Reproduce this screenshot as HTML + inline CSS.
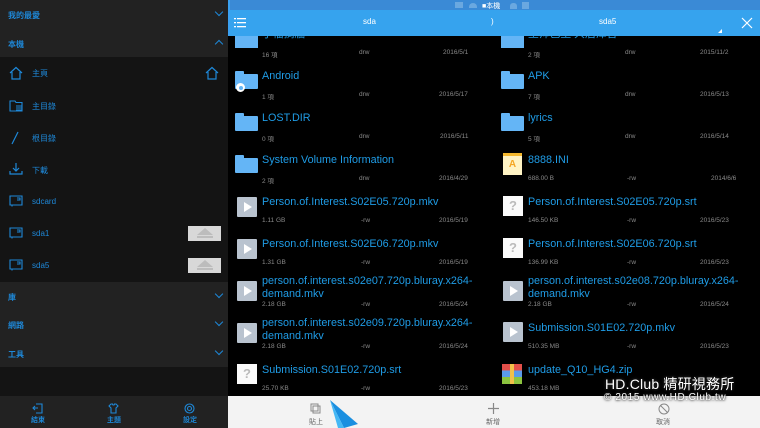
<!DOCTYPE html>
<html><head><meta charset="utf-8"><style>
*{margin:0;padding:0;box-sizing:border-box}
body{width:760px;height:428px;overflow:hidden;background:#000;font-family:"Liberation Sans","Noto Sans CJK TC",sans-serif;position:relative}
.a{position:absolute}
.sb{left:0;top:0;width:228px;height:428px;background:#141414}
.sec{font-size:8px;color:#1e88d8;font-weight:bold}
.chev{width:6px;height:6px;border-right:1.3px solid #1e88d8;border-bottom:1.3px solid #1e88d8}
.it{font-size:8px;color:#1e88d8;left:32px}
.n{font-size:10.8px;line-height:12.5px;color:#1f9ce6;white-space:nowrap}
.m{font-size:6.5px;color:#8a8a8a;white-space:nowrap}
.fold{width:23px;height:15px;background:#64b5f6;border-radius:1px}
.fold:before{content:"";position:absolute;left:0;top:-3px;width:9px;height:4px;background:#64b5f6;border-radius:1px 1px 0 0}
.vid{width:20px;height:20px;background:#b9c3cf;border-radius:1px}
.vid:after{content:"";position:absolute;left:7px;top:5px;border-left:8px solid #fff;border-top:5px solid transparent;border-bottom:5px solid transparent}
.q{width:20px;height:20px;background:#fafafa;color:#bbb;font-size:13px;font-weight:bold;text-align:center;line-height:20px}
</style></head><body>
<div class="a sb"></div>
<div class="a" style="left:0;top:0;width:228px;height:57px;background:#222"></div>
<div class="a" style="left:0;top:282px;width:228px;height:85px;background:#222"></div>
<div class="a" style="left:0;top:396px;width:228px;height:32px;background:#222"></div>
<div class="a" style="left:228px;top:0;width:2px;height:36px;background:#3aa0f0"></div>
<div class="a sec" style="left:8px;top:10px">我的最愛</div><div class="a chev" style="left:216px;top:9px;transform:rotate(45deg)"></div>
<div class="a sec" style="left:8px;top:39px">本機</div><div class="a chev" style="left:216px;top:41px;transform:rotate(-135deg)"></div>
<svg class="a" style="left:9px;top:66px" width="14" height="14" viewBox="0 0 14 14" fill="none" stroke="#1e88d8" stroke-width="1.2"><path d="M1 7L7 1.5 13 7M3 6v7h8V6"/></svg>
<svg class="a" style="left:205px;top:66px" width="14" height="14" viewBox="0 0 14 14" fill="none" stroke="#1e88d8" stroke-width="1.2"><path d="M1 7L7 1.5 13 7M3 6v7h8V6"/></svg>
<div class="a it" style="top:68px">主頁</div>
<svg class="a" style="left:9px;top:99px" width="14" height="13" viewBox="0 0 14 13" fill="none" stroke="#1e88d8" stroke-width="1.1"><path d="M1 2h5l1 1.5h6V12H1z M7 7h6M7 9h6M7 11h6"/></svg>
<div class="a it" style="top:101px">主目錄</div>
<svg class="a" style="left:11px;top:131px" width="8" height="14"><path d="M7 1L1 13" stroke="#1e88d8" stroke-width="1.2"/></svg>
<div class="a it" style="top:133px">根目錄</div>
<svg class="a" style="left:9px;top:162px" width="14" height="13" viewBox="0 0 14 13" fill="none" stroke="#1e88d8" stroke-width="1.2"><path d="M7 1v8M4 6l3 3 3-3M1 9v3h12V9"/></svg>
<div class="a it" style="top:165px">下載</div>
<svg class="a" style="left:9px;top:195px" width="14" height="12" viewBox="0 0 14 12" fill="none" stroke="#1e88d8" stroke-width="1.1"><path d="M1 1h12v9H1zM8 3h3v2H8M3 10v1.5"/></svg>
<div class="a it" style="top:197px">sdcard</div>
<svg class="a" style="left:9px;top:227px" width="14" height="12" viewBox="0 0 14 12" fill="none" stroke="#1e88d8" stroke-width="1.1"><path d="M1 1h12v9H1zM8 3h3v2H8M3 10v1.5"/></svg>
<div class="a it" style="top:229px">sda1</div>
<svg class="a" style="left:9px;top:259px" width="14" height="12" viewBox="0 0 14 12" fill="none" stroke="#1e88d8" stroke-width="1.1"><path d="M1 1h12v9H1zM8 3h3v2H8M3 10v1.5"/></svg>
<div class="a it" style="top:261px">sda5</div>
<div class="a" style="left:188px;top:226px;width:33px;height:15px;background:#d8d8d8"><div class="a" style="left:9px;top:2px;border-bottom:7px solid #bcbcbc;border-left:8px solid transparent;border-right:8px solid transparent"></div><div class="a" style="left:9px;top:10px;width:16px;height:2px;background:#bcbcbc"></div></div>
<div class="a" style="left:188px;top:258px;width:33px;height:15px;background:#d8d8d8"><div class="a" style="left:9px;top:2px;border-bottom:7px solid #bcbcbc;border-left:8px solid transparent;border-right:8px solid transparent"></div><div class="a" style="left:9px;top:10px;width:16px;height:2px;background:#bcbcbc"></div></div>
<div class="a sec" style="left:8px;top:292px">庫</div><div class="a chev" style="left:216px;top:291px;transform:rotate(45deg)"></div>
<div class="a sec" style="left:8px;top:320px">網路</div><div class="a chev" style="left:216px;top:319px;transform:rotate(45deg)"></div>
<div class="a sec" style="left:8px;top:349px">工具</div><div class="a chev" style="left:216px;top:348px;transform:rotate(45deg)"></div>
<div class="a sec" style="left:31px;top:415px;font-size:7px">結束</div>
<div class="a sec" style="left:107px;top:415px;font-size:7px">主題</div>
<div class="a sec" style="left:183px;top:415px;font-size:7px">設定</div>
<svg class="a" style="left:32px;top:403px" width="11" height="11" fill="none" stroke="#1e88d8" stroke-width="1.1"><path d="M4 1h6v9H4M1 5h5M3 3l-2 2 2 2"/></svg>
<svg class="a" style="left:108px;top:403px" width="11" height="11" fill="none" stroke="#1e88d8" stroke-width="1.1"><path d="M3 1L1 3l2 2v5h5V5l2-2-2-2H6.5a1 1 0 0 1-2 0z"/></svg>
<svg class="a" style="left:184px;top:403px" width="11" height="11" fill="none" stroke="#1e88d8" stroke-width="1.1"><circle cx="5.5" cy="5.5" r="4.5"/><circle cx="5.5" cy="5.5" r="2"/></svg>

<!-- clipped first row -->
<div class="a" style="left:235px;top:34px;width:23px;height:14px;background:#64b5f6"></div>
<div class="a n" style="left:262px;top:28px">子檔捐牆</div>
<div class="a" style="left:501px;top:34px;width:23px;height:14px;background:#64b5f6"></div>
<div class="a n" style="left:528px;top:28px">王帅已王 大后漳音</div>

<!-- right panel -->
<div class="a" style="left:230px;top:0;width:530px;height:10px;background:#3a8ad6"></div>
<div class="a" style="left:482px;top:1px;font-size:7px;color:#fff">■本機</div>
<div class="a" style="left:455px;top:2px;width:8px;height:6px;background:#6aa8e0"></div>
<div class="a" style="left:469px;top:3px;width:8px;height:5px;background:#6aa8e0;border-radius:4px 4px 0 0"></div>
<div class="a" style="left:510px;top:3px;width:7px;height:6px;background:#6aa8e0;border-radius:3px 3px 0 0"></div>
<div class="a" style="left:522px;top:2px;width:7px;height:7px;background:#6aa8e0"></div>
<div class="a" style="left:230px;top:10px;width:530px;height:26px;background:#36a3ee"></div>
<svg class="a" style="left:234px;top:18px" width="12" height="10" fill="#fff"><rect x="0" y="0" width="2" height="1.3"/><rect x="3" y="0" width="9" height="1.3"/><rect x="0" y="4" width="2" height="1.3"/><rect x="3" y="4" width="9" height="1.3"/><rect x="0" y="8" width="2" height="1.3"/><rect x="3" y="8" width="9" height="1.3"/></svg>
<div class="a" style="left:363px;top:17px;font-size:8px;color:#fff">sda</div>
<div class="a" style="left:491px;top:17px;font-size:8px;color:#fff">)</div>
<div class="a" style="left:599px;top:17px;font-size:8px;color:#fff">sda5</div>
<div class="a" style="left:718px;top:29px;border-bottom:4px solid #fff;border-left:4px solid transparent"></div>
<svg class="a" style="left:741px;top:17px" width="12" height="12" stroke="#fff" stroke-width="1.2"><path d="M1 1l10 10M11 1L1 11"/></svg>

<!-- left column -->
<div class="a m" style="left:262px;top:49px">16 項</div><div class="a m" style="left:359px;top:49px">drw</div><div class="a m" style="left:443px;top:49px">2016/5/1</div>
<div class="a fold" style="left:235px;top:74px"></div><div class="a" style="left:236px;top:83px;width:9px;height:9px;border-radius:50%;background:#fff;border:2px solid #fff"><div style="width:4px;height:4px;margin:0.5px;border-radius:50%;background:#64b5f6"></div></div>
<div class="a n" style="left:262px;top:70px">Android</div>
<div class="a m" style="left:262px;top:91px">1 項</div><div class="a m" style="left:359px;top:91px">drw</div><div class="a m" style="left:439px;top:91px">2016/5/17</div>
<div class="a fold" style="left:235px;top:116px"></div><div class="a n" style="left:262px;top:112px">LOST.DIR</div>
<div class="a m" style="left:262px;top:133px">0 項</div><div class="a m" style="left:359px;top:133px">drw</div><div class="a m" style="left:440px;top:133px">2016/5/11</div>
<div class="a fold" style="left:235px;top:158px"></div><div class="a n" style="left:262px;top:154px">System Volume Information</div>
<div class="a m" style="left:262px;top:175px">2 項</div><div class="a m" style="left:359px;top:175px">drw</div><div class="a m" style="left:439px;top:175px">2016/4/29</div>
<div class="a vid" style="left:237px;top:197px"></div><div class="a n" style="left:262px;top:196px">Person.of.Interest.S02E05.720p.mkv</div>
<div class="a m" style="left:262px;top:217px">1.11 GB</div><div class="a m" style="left:361px;top:217px">-rw</div><div class="a m" style="left:439px;top:217px">2016/5/19</div>
<div class="a vid" style="left:237px;top:239px"></div><div class="a n" style="left:262px;top:238px">Person.of.Interest.S02E06.720p.mkv</div>
<div class="a m" style="left:262px;top:259px">1.31 GB</div><div class="a m" style="left:361px;top:259px">-rw</div><div class="a m" style="left:439px;top:259px">2016/5/19</div>
<div class="a vid" style="left:237px;top:281px"></div><div class="a n" style="left:262px;top:275px">person.of.interest.s02e07.720p.bluray.x264-<br>demand.mkv</div>
<div class="a m" style="left:262px;top:301px">2.18 GB</div><div class="a m" style="left:361px;top:301px">-rw</div><div class="a m" style="left:439px;top:301px">2016/5/24</div>
<div class="a vid" style="left:237px;top:323px"></div><div class="a n" style="left:262px;top:317px">person.of.interest.s02e09.720p.bluray.x264-<br>demand.mkv</div>
<div class="a m" style="left:262px;top:343px">2.18 GB</div><div class="a m" style="left:361px;top:343px">-rw</div><div class="a m" style="left:439px;top:343px">2016/5/24</div>
<div class="a q" style="left:237px;top:364px">?</div><div class="a n" style="left:262px;top:364px">Submission.S01E02.720p.srt</div>
<div class="a m" style="left:262px;top:385px">25.70 KB</div><div class="a m" style="left:361px;top:385px">-rw</div><div class="a m" style="left:439px;top:385px">2016/5/23</div>

<!-- right column -->
<div class="a m" style="left:528px;top:49px">2 項</div><div class="a m" style="left:625px;top:49px">drw</div><div class="a m" style="left:700px;top:49px">2015/11/2</div>
<div class="a fold" style="left:501px;top:74px"></div><div class="a n" style="left:528px;top:70px">APK</div>
<div class="a m" style="left:528px;top:91px">7 項</div><div class="a m" style="left:625px;top:91px">drw</div><div class="a m" style="left:700px;top:91px">2016/5/13</div>
<div class="a fold" style="left:501px;top:116px"></div><div class="a n" style="left:528px;top:112px">lyrics</div>
<div class="a m" style="left:528px;top:133px">5 項</div><div class="a m" style="left:625px;top:133px">drw</div><div class="a m" style="left:700px;top:133px">2016/5/14</div>
<div class="a" style="left:503px;top:153px;width:19px;height:22px;background:#fff3c4;border-top:3px solid #f5b82e;color:#f5a623;font-size:10px;font-weight:bold;text-align:center;line-height:18px">A</div>
<div class="a n" style="left:528px;top:154px">8888.INI</div>
<div class="a m" style="left:528px;top:175px">688.00 B</div><div class="a m" style="left:627px;top:175px">-rw</div><div class="a m" style="left:711px;top:175px">2014/6/6</div>
<div class="a q" style="left:503px;top:196px">?</div><div class="a n" style="left:528px;top:196px">Person.of.Interest.S02E05.720p.srt</div>
<div class="a m" style="left:528px;top:217px">146.50 KB</div><div class="a m" style="left:627px;top:217px">-rw</div><div class="a m" style="left:700px;top:217px">2016/5/23</div>
<div class="a q" style="left:503px;top:238px">?</div><div class="a n" style="left:528px;top:238px">Person.of.Interest.S02E06.720p.srt</div>
<div class="a m" style="left:528px;top:259px">136.99 KB</div><div class="a m" style="left:627px;top:259px">-rw</div><div class="a m" style="left:700px;top:259px">2016/5/23</div>
<div class="a vid" style="left:503px;top:281px"></div><div class="a n" style="left:528px;top:275px">person.of.interest.s02e08.720p.bluray.x264-<br>demand.mkv</div>
<div class="a m" style="left:528px;top:301px">2.18 GB</div><div class="a m" style="left:627px;top:301px">-rw</div><div class="a m" style="left:700px;top:301px">2016/5/24</div>
<div class="a vid" style="left:503px;top:322px"></div><div class="a n" style="left:528px;top:322px">Submission.S01E02.720p.mkv</div>
<div class="a m" style="left:528px;top:343px">510.35 MB</div><div class="a m" style="left:627px;top:343px">-rw</div><div class="a m" style="left:700px;top:343px">2016/5/23</div>
<div class="a" style="left:502px;top:364px;width:20px;height:20px;background:linear-gradient(#e2504a 0 33%,#5b9bea 33% 66%,#8cc43f 66%)"><div style="position:absolute;left:8px;top:0;width:4px;height:20px;background:#f2c04a"></div></div>
<div class="a n" style="left:528px;top:364px">update_Q10_HG4.zip</div>
<div class="a m" style="left:528px;top:385px">453.18 MB</div>

<!-- bottom bar -->
<div class="a" style="left:228px;top:396px;width:532px;height:32px;background:#f3f3f3"></div>
<svg class="a" style="left:310px;top:403px" width="11" height="11" fill="none" stroke="#888" stroke-width="1"><rect x="1" y="1" width="7" height="7"/><rect x="3" y="3" width="7" height="7"/></svg>
<div class="a" style="left:309px;top:417px;font-size:7px;color:#666">貼上</div>
<svg class="a" style="left:330px;top:400px" width="30" height="28"><path d="M0 0L28 24 14 28z" fill="#1a8fe0"/><path d="M0 0L14 28 8 28z" fill="#45b8f5"/></svg>
<svg class="a" style="left:488px;top:403px" width="11" height="11" stroke="#888" stroke-width="1.2"><path d="M5.5 0v11M0 5.5h11"/></svg>
<div class="a" style="left:486px;top:417px;font-size:7px;color:#666">新增</div>
<svg class="a" style="left:658px;top:403px" width="12" height="12" fill="none" stroke="#888" stroke-width="1"><circle cx="6" cy="6" r="5"/><path d="M2.5 2.5l7 7"/></svg>
<div class="a" style="left:656px;top:417px;font-size:7px;color:#666">取消</div>
<div class="a" style="left:605px;top:374px;font-size:14px;color:#fff;letter-spacing:0.2px;text-shadow:0 0 2px #000,0 0 3px #555">HD.Club 精研視務所</div>
<div class="a" style="left:604px;top:392px;font-size:10px;color:#fff;letter-spacing:0.6px;text-shadow:0 0 2px #000,0 0 3px #444">© 2015  www.HD.Club.tw</div>
</body></html>
